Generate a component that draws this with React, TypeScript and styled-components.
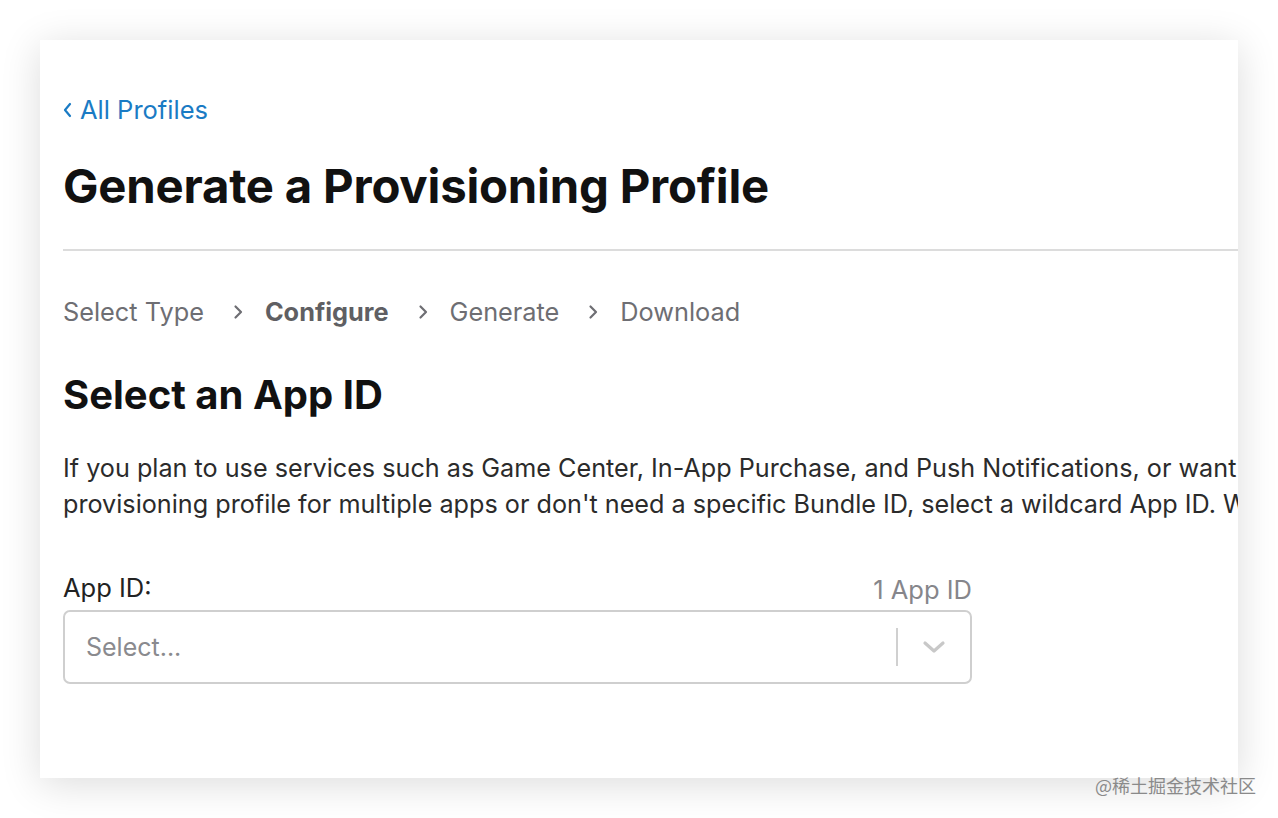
import styled, {createGlobalStyle} from "styled-components";

const GlobalStyle = createGlobalStyle`
  html, body {
    margin: 0;
    padding: 0;
    background: #ffffff;
    font-family: Inter, "Noto Sans", "Noto Sans CJK SC", sans-serif;
  }
`;

const Page = styled.div`
  position: relative;
  width: 1278px;
  height: 818px;
  padding: 40px;
  box-sizing: border-box;
  overflow: hidden;
`;

const Card = styled.div`
  width: 1198px;
  height: 738px;
  background: #ffffff;
  box-shadow: 0 6px 38px rgba(0, 0, 0, 0.14);
  overflow: hidden;
  padding: 53px 0 0 23px;
  box-sizing: border-box;
`;

const Inner = styled.div`
  width: 1500px;
`;

const BackLink = styled.a`
  display: flex;
  align-items: center;
  gap: 8px;
  color: #1a7bc4;
  font-size: 25.5px;
  line-height: 34px;
  text-decoration: none;
`;

const Title = styled.h1`
  margin: 31px 0 0;
  font-size: 47.3px;
  line-height: 56px;
  font-weight: 700;
  color: #111111;
  letter-spacing: -0.2px;
`;

const Divider = styled.hr`
  margin: 35px 0 0;
  border: none;
  height: 2px;
  background: #dcdcdc;
`;

const Steps = styled.nav`
  display: flex;
  align-items: center;
  margin-top: 43px;
  font-size: 25.3px;
  line-height: 36px;
  color: #6e6e73;
`;

const Step = styled.span<{active?: boolean}>`
  font-weight: ${(p) => (p.active ? 700 : 400)};
  color: ${(p) => (p.active ? "#5f5f63" : "#6e6e73")};
`;

const StepArrow = styled.span`
  display: flex;
  align-items: center;
  margin: 0 22px 0 29px;
`;

const Subtitle = styled.h2`
  margin: 41px 0 0;
  font-size: 40px;
  line-height: 48px;
  font-weight: 700;
  color: #111111;
`;

const Para = styled.p`
  margin: 31px 0 0;
  font-size: 25.2px;
  line-height: 36px;
  color: #2b2b2b;
  white-space: nowrap;
`;

const Field = styled.div`
  width: 909px;
  margin-top: 51px;
`;

const FieldHead = styled.div`
  display: flex;
  justify-content: space-between;
  align-items: flex-start;
`;

const Label = styled.label`
  font-size: 25.5px;
  line-height: 30px;
  color: #222222;
`;

const Count = styled.span`
  font-size: 25.5px;
  line-height: 30px;
  color: #86868b;
  position: relative;
  top: 2px;
`;

const SelectBox = styled.div`
  margin-top: 7px;
  height: 74px;
  border: 2px solid #cfcfcf;
  border-radius: 7px;
  display: flex;
  align-items: center;
  box-sizing: border-box;
`;

const Placeholder = styled.span`
  flex: 1;
  padding-left: 21px;
  font-size: 25px;
  color: #8a8a8e;
`;

const Sep = styled.span`
  width: 2px;
  height: 38px;
  background: #d0d0d0;
`;

const Caret = styled.span`
  width: 72px;
  display: flex;
  justify-content: center;
  align-items: center;
`;

const Watermark = styled.div`
  position: absolute;
  right: 22px;
  bottom: 20px;
  font-size: 18px;
  color: #8a8a8a;
  font-family: "Noto Sans CJK SC", sans-serif;
`;

const Chevron = ({color}: {color: string}) => (
  <svg width={10} height={16} viewBox="0 0 10 16" fill="none">
    <path d="M2.5 2.5l5.5 5.5-5.5 5.5" stroke={color} strokeWidth={2.2} strokeLinecap="round" strokeLinejoin="round" />
  </svg>
);

export default function App() {
  return (
    <>
      <GlobalStyle />
      <Page>
        <Card>
          <Inner>
            <BackLink href="#">
              <svg width={9} height={16} viewBox="0 0 9 16" fill="none">
                <path d="M7 2L2 8l5 6" stroke="#1a7bc4" strokeWidth={2.2} strokeLinecap="round" strokeLinejoin="round" />
              </svg>
              All Profiles
            </BackLink>
            <Title>Generate a Provisioning Profile</Title>
            <Divider />
            <Steps>
              <Step>Select Type</Step>
              <StepArrow><Chevron color="#6e6e73" /></StepArrow>
              <Step active>Configure</Step>
              <StepArrow><Chevron color="#6e6e73" /></StepArrow>
              <Step>Generate</Step>
              <StepArrow><Chevron color="#6e6e73" /></StepArrow>
              <Step>Download</Step>
            </Steps>
            <Subtitle>Select an App ID</Subtitle>
            <Para>
              If you plan to use services such as Game Center, In-App Purchase, and Push Notifications, or want a Bundle ID unique to a single app, use an explicit App ID.
              <br />
              provisioning profile for multiple apps or don't need a specific Bundle ID, select a wildcard App ID. Wildcard App IDs use an asterisk (*).
            </Para>
            <Field>
              <FieldHead>
                <Label>App ID:</Label>
                <Count>1 App ID</Count>
              </FieldHead>
              <SelectBox>
                <Placeholder>Select...</Placeholder>
                <Sep />
                <Caret>
                  <svg width={24} height={14} viewBox="0 0 24 14" fill="none">
                    <path d="M3 3l9 8 9-8" stroke="#c8c8c8" strokeWidth={3.2} strokeLinecap="round" strokeLinejoin="round" />
                  </svg>
                </Caret>
              </SelectBox>
            </Field>
          </Inner>
        </Card>
        <Watermark>@稀土掘金技术社区</Watermark>
      </Page>
    </>
  );
}
